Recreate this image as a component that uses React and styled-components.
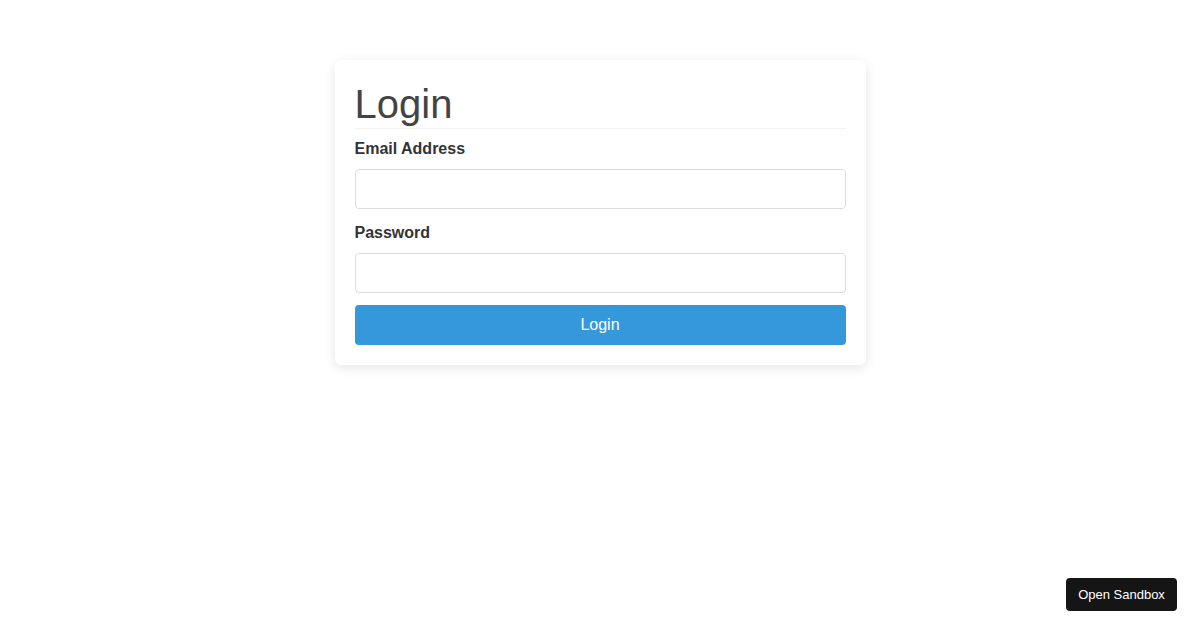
import React from 'react';
import styled, { createGlobalStyle } from 'styled-components';

export default function App() {
    return (
        <>
            <GlobalStyle />
            <Page>
                <Card>
                    <Title>Login</Title>
                    <Label htmlFor="email" first>Email Address</Label>
                    <Input id="email" type="email" />
                    <Label htmlFor="password">Password</Label>
                    <Input id="password" type="password" />
                    <Button type="button">Login</Button>
                </Card>
            </Page>
            <SandboxButton type="button">Open Sandbox</SandboxButton>
        </>
    )
}

const GlobalStyle = createGlobalStyle`
    html, body {
        margin: 0;
        padding: 0;
        background: #fff;
        font-family: "Liberation Sans", Arial, sans-serif;
    }
`;

const Page = styled.div`
    display: flex;
    justify-content: center;
    padding-top: 60px;
    height: 630px;
    box-sizing: border-box;
`;

const Card = styled.div`
    width: 531px;
    height: fit-content;
    box-sizing: border-box;
    padding: 20px;
    background: #fff;
    border-radius: 6px;
    box-shadow: 0 3px 12px rgba(0, 0, 0, 0.1);
`;

const Title = styled.h1`
    margin: 0;
    font-size: 40px;
    font-weight: 400;
    line-height: 48px;
    color: #444;
    border-bottom: 1px solid #f2f2f2;
`;

const Label = styled.label`
    display: block;
    margin: ${p => (p.first ? '11px' : '15px')} 0 11px;
    font-size: 16px;
    font-weight: 700;
    line-height: 18px;
    color: #333;
`;

const Input = styled.input`
    display: block;
    width: 100%;
    height: 40px;
    box-sizing: border-box;
    border: 1px solid #ddd;
    border-radius: 4px;
    padding: 0 10px;
    font-size: 16px;
    outline: none;
`;

const Button = styled.button`
    display: block;
    width: 100%;
    height: 40px;
    margin-top: 12px;
    border: none;
    border-radius: 4px;
    background: #3498db;
    color: #fff;
    font-family: "Liberation Sans", Arial, sans-serif;
    font-size: 16px;
    cursor: pointer;
`;

const SandboxButton = styled.button`
    position: fixed;
    right: 23px;
    bottom: 19px;
    width: 111px;
    height: 33px;
    border: none;
    border-radius: 4px;
    background: #151515;
    color: #fff;
    font-family: "Liberation Sans", Arial, sans-serif;
    font-size: 13px;
    cursor: pointer;
`;
